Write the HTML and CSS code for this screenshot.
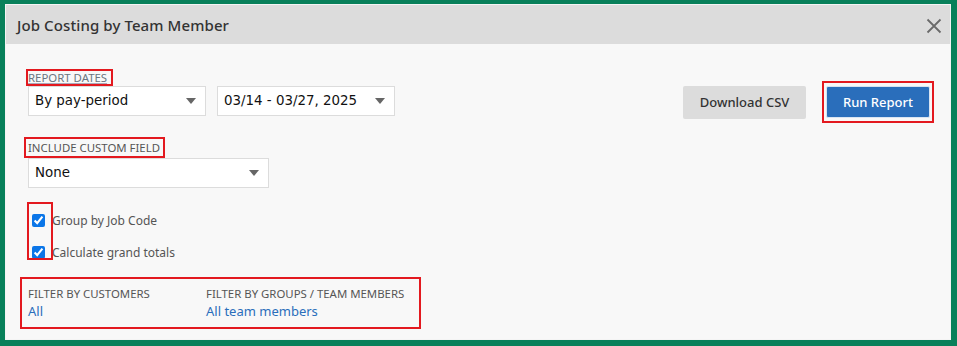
FILE: index.html
```html
<!DOCTYPE html>
<html>
<head>
	<title>Job Costing by Team Member</title>
	<meta http-equiv="Content-Type" content="text/html; charset=UTF-8" />
	<link rel="stylesheet" href="styles.css">
</head>
<body>
<div id='frame'>
<div id='dialog'>
	<div class='head'>
		<h1>Job Costing by Team Member</h1>
		<svg class='close' width='16' height='16' viewBox='0 0 16 16'><path d='M1.5 1.5L14.5 14.5M14.5 1.5L1.5 14.5' stroke='#6a6a6a' stroke-width='1.8' fill='none'/></svg>
	</div>
	<div class='content'>
		<div class='top-row'>
			<div class='left'>
				<div class='label mark dates-mark'>REPORT DATES</div>
				<div class='selects'>
					<div class='select w177'>By pay-period<i class='caret'></i></div>
					<div class='select w177'>03/14 - 03/27, 2025<i class='caret'></i></div>
				</div>
			</div>
			<div class='actions'>
				<a class='btn gray'>Download CSV</a>
				<span class='mark run-mark'><a class='btn blue'>Run Report</a></span>
			</div>
		</div>

		<div class='label mark field-mark'>INCLUDE CUSTOM FIELD</div>
		<div class='select w241'>None<i class='caret'></i></div>

		<div class='checks'>
			<div class='mark check-mark'></div>
			<label class='check'><input type='checkbox' checked>Group by Job Code</label>
			<label class='check'><input type='checkbox' checked>Calculate grand totals</label>
		</div>

		<div class='filters mark'>
			<div class='filter f-cust'>
				<div class='label'>FILTER BY CUSTOMERS</div>
				<a class='link'>All</a>
			</div>
			<div class='filter'>
				<div class='label'>FILTER BY GROUPS / TEAM MEMBERS</div>
				<a class='link'>All team members</a>
			</div>
		</div>
	</div>
</div>
</div>
</body>
</html>
```

FILE: styles.css
```css
html,body{margin:0; padding:0; background:#fff;}
body{font-family:"DejaVu Sans", Verdana, sans-serif; color:#222;}

#frame{width:957px; height:346px; box-sizing:border-box; border:5px solid #08805a; border-top-width:4px; border-right-width:6px; border-bottom-width:6px;}
#dialog{height:100%; box-sizing:border-box; border:1px solid #f4f4f4; background:#f8f8f8;}

.head{height:39px; background:#dcdcdc; display:flex; align-items:center; justify-content:space-between; padding:0 8px 0 11px;}
.head h1{margin:0; font-family:"Noto Sans", sans-serif; font-size:15px; font-weight:500; color:#333; letter-spacing:0.1px;}
.close{display:block; margin-top:2px;}

.content{padding:0 16px 0 22px;}

.mark{border:2px solid #e3191f;}

.label{font-family:"Noto Sans", sans-serif; font-size:11.4px; color:#555; line-height:14px;}

.top-row{display:flex; justify-content:space-between; align-items:flex-start; padding-top:25px;}
.dates-mark{width:fit-content; margin-left:-2px; padding:0 4px 0 0; line-height:13px; color:#6a7580; text-decoration:underline; text-decoration-color:#aab;}
.selects{display:flex; gap:11px;}

.select{position:relative; height:30px; box-sizing:border-box; background:#fff; border:1px solid #dcdcdc; font-size:13.4px; line-height:28px; padding-left:6px; color:#111;}
.w177{width:178px;}
.w241{width:241px;}
.caret{position:absolute; right:9px; top:11px; width:0; height:0; border-left:5px solid transparent; border-right:5px solid transparent; border-top:6px solid #666;}

.actions{display:flex; align-items:center; gap:16px; margin-top:12px;}
.btn{display:block; height:33px; line-height:33px; box-sizing:border-box; border-radius:2px; font-family:"Noto Sans", sans-serif; font-size:13px; font-weight:500; text-align:center;}
.gray{width:123px; background:#dcdcdc; color:#333;}
.run-mark{display:block; padding:3px 2px;}
.blue{width:104px; height:32px; background:#2a6ebb; color:#fff; border:1px solid #d8e4f2; line-height:30px;}

.field-mark{width:fit-content; margin-left:-4px; margin-top:14px; padding:1px 3px 1px 2px; line-height:15px;}

.checks{position:relative; margin-top:25px; padding-left:4px;}
.check-mark{position:absolute; left:-1px; top:-11px; width:22px; height:54px;}
.check{display:flex; align-items:center; height:14px; margin-bottom:18px; font-family:"Noto Sans", sans-serif; font-size:12px; color:#555;}
.check input{margin:0 7px 0 0; width:13px; height:13px; accent-color:#0b76e8;}

.filters{display:flex; margin:2px 0 0 -8px; width:391px; height:40px; padding:8px 0 0 6px; box-sizing:content-box;}
.f-cust{width:178px;}
.link{display:block; font-family:"Noto Sans", sans-serif; font-size:13px; color:#2a6ebb; line-height:18px; margin-top:1px;}
```
